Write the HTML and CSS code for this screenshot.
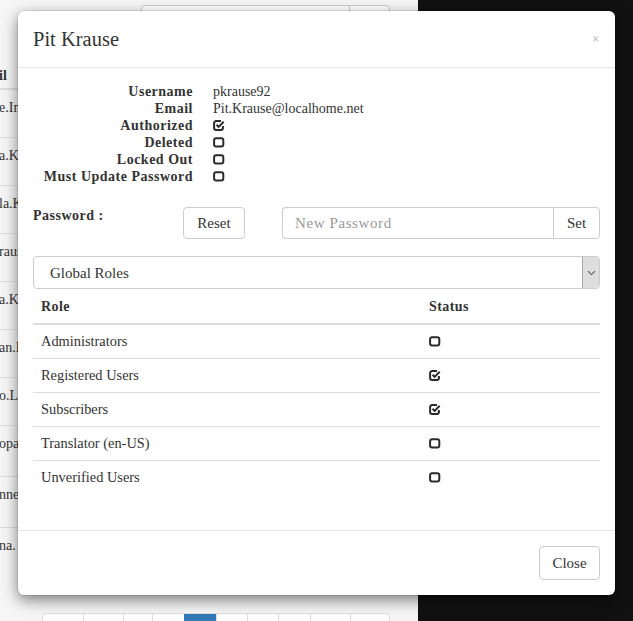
FILE: index.html
```html
<!DOCTYPE html>
<html lang="en">
<head>
<meta charset="utf-8">
<title>Pit Krause</title>
<link rel="stylesheet" href="styles.css">
</head>
<body>
<div class="page">
  <div class="main">
    <div class="top-group"><span class="tg-input"></span><span class="tg-btn"></span></div>
    <div class="bg-table">
      <div class="bg-head">il</div>
      <div class="bg-row">e.Im</div>
      <div class="bg-row">a.K</div>
      <div class="bg-row">la.K</div>
      <div class="bg-row">raus</div>
      <div class="bg-row">a.Ku</div>
      <div class="bg-row">an.K</div>
      <div class="bg-row">o.Le</div>
      <div class="bg-row tall">opa</div>
      <div class="bg-row tall">nne</div>
      <div class="bg-row last">na.</div>
    </div>
    <div class="pager">
      <span class="pg w40"></span><span class="pg w40"></span><span class="pg w30"></span><span class="pg w32"></span><span class="pg w32 active"></span><span class="pg w31"></span><span class="pg w31"></span><span class="pg w33"></span><span class="pg w40"></span><span class="pg w39"></span>
    </div>
  </div>
  <div class="side"></div>
</div>

<div class="modal">
  <div class="m-header">
    <h4 class="m-title">Pit Krause</h4>
    <span class="m-close">×</span>
  </div>
  <div class="m-body">
    <dl class="info">
      <dt>Username</dt><dd>pkrause92</dd>
      <dt>Email</dt><dd>Pit.Krause@localhome.net</dd>
      <dt>Authorized</dt><dd><svg class="ico" width="12" height="11" viewBox="0 0 12 11"><path d="M8 1.1H3.1A2 2 0 0 0 1.1 3.1V7.9A2 2 0 0 0 3.1 9.9H7.9A2 2 0 0 0 9.9 7.9V6" fill="none" stroke="#2b2b2b" stroke-width="2"/><path d="M3.5 4.8L5.6 6.9L10.7 1.8" fill="none" stroke="#2b2b2b" stroke-width="2"/></svg></dd>
      <dt>Deleted</dt><dd><svg class="ico" width="12" height="11" viewBox="0 0 12 11"><rect x="1.1" y="1.2" width="9.2" height="8.4" rx="2" fill="none" stroke="#2b2b2b" stroke-width="2"/></svg></dd>
      <dt>Locked Out</dt><dd><svg class="ico" width="12" height="11" viewBox="0 0 12 11"><rect x="1.1" y="1.2" width="9.2" height="8.4" rx="2" fill="none" stroke="#2b2b2b" stroke-width="2"/></svg></dd>
      <dt>Must Update Password</dt><dd><svg class="ico" width="12" height="11" viewBox="0 0 12 11"><rect x="1.1" y="1.2" width="9.2" height="8.4" rx="2" fill="none" stroke="#2b2b2b" stroke-width="2"/></svg></dd>
    </dl>

    <div class="pw-row">
      <span class="pw-label">Password :</span>
      <button class="btn reset">Reset</button>
      <div class="pw-group">
        <input class="pw-input" type="text" placeholder="New Password">
        <button class="btn set">Set</button>
      </div>
    </div>

    <div class="select">
      <span class="sel-text">Global Roles</span>
      <span class="sel-arrow"><svg width="9" height="6" viewBox="0 0 9 6"><path d="M1 1.2L4.5 4.6L8 1.2" fill="none" stroke="#555" stroke-width="1.1"/></svg></span>
    </div>

    <table class="roles">
      <thead>
        <tr><th class="c-role">Role</th><th>Status</th></tr>
      </thead>
      <tbody>
        <tr><td>Administrators</td><td><svg class="ico" width="12" height="11" viewBox="0 0 12 11"><rect x="1.1" y="1.2" width="9.2" height="8.4" rx="2" fill="none" stroke="#2b2b2b" stroke-width="2"/></svg></td></tr>
        <tr><td>Registered Users</td><td><svg class="ico" width="12" height="11" viewBox="0 0 12 11"><path d="M8 1.1H3.1A2 2 0 0 0 1.1 3.1V7.9A2 2 0 0 0 3.1 9.9H7.9A2 2 0 0 0 9.9 7.9V6" fill="none" stroke="#2b2b2b" stroke-width="2"/><path d="M3.5 4.8L5.6 6.9L10.7 1.8" fill="none" stroke="#2b2b2b" stroke-width="2"/></svg></td></tr>
        <tr><td>Subscribers</td><td><svg class="ico" width="12" height="11" viewBox="0 0 12 11"><path d="M8 1.1H3.1A2 2 0 0 0 1.1 3.1V7.9A2 2 0 0 0 3.1 9.9H7.9A2 2 0 0 0 9.9 7.9V6" fill="none" stroke="#2b2b2b" stroke-width="2"/><path d="M3.5 4.8L5.6 6.9L10.7 1.8" fill="none" stroke="#2b2b2b" stroke-width="2"/></svg></td></tr>
        <tr><td>Translator (en-US)</td><td><svg class="ico" width="12" height="11" viewBox="0 0 12 11"><rect x="1.1" y="1.2" width="9.2" height="8.4" rx="2" fill="none" stroke="#2b2b2b" stroke-width="2"/></svg></td></tr>
        <tr><td>Unverified Users</td><td><svg class="ico" width="12" height="11" viewBox="0 0 12 11"><rect x="1.1" y="1.2" width="9.2" height="8.4" rx="2" fill="none" stroke="#2b2b2b" stroke-width="2"/></svg></td></tr>
      </tbody>
    </table>
  </div>
  <div class="m-footer">
    <button class="btn close-btn">Close</button>
  </div>
</div>
</body>
</html>
```

FILE: styles.css
```css
* { box-sizing: border-box; }

html, body {
  margin: 0;
  padding: 0;
  width: 633px;
  height: 621px;
  overflow: hidden;
}

body {
  font-family: "Liberation Serif", "Times New Roman", serif;
  font-size: 14px;
  color: #333;
  background: #f6f6f6;
}

.page {
  display: flex;
  width: 633px;
  height: 621px;
}

.main {
  width: 418px;
  background: #f6f6f6;
  padding-top: 5px;
}

.side {
  flex: 1;
  background: #111;
}

.top-group {
  display: flex;
  margin-left: 141px;
  width: 249px;
  height: 34px;
  border: 1px solid #ccc;
  border-radius: 4px;
  background: #fff;
}

.tg-input { flex: 1; }
.tg-btn { width: 40px; border-left: 1px solid #ccc; }

.bg-table {
  margin-top: 20px;
}

.bg-head {
  height: 31px;
  padding-top: 8px;
  line-height: 17px;
  font-weight: bold;
  border-bottom: 2px solid #ddd;
  margin-left: -1px;
}

.bg-row {
  height: 48px;
  padding-top: 9px;
  line-height: 17px;
  border-bottom: 1px solid #ddd;
  margin-left: -1px;
}

.bg-row.tall { height: 51px; }
.bg-row.last { height: 47px; border-bottom: 0; }

.pager {
  display: flex;
  margin-top: 38px;
  margin-left: 42px;
  width: 348px;
  height: 34px;
  border: 1px solid #ddd;
  border-radius: 4px;
  background: #fff;
  overflow: hidden;
}

.pg { height: 34px; border-left: 1px solid #ddd; }
.pg:first-child { border-left: 0; }
.pg.w40 { width: 40px; }
.pg.w39 { width: 39px; }
.pg.w33 { width: 33px; }
.pg.w32 { width: 32px; }
.pg.w31 { width: 31px; }
.pg.w30 { width: 30px; }
.pg.active { background: #337ab7; border-color: #337ab7; }

/* modal overlay */
.modal {
  position: absolute;
  left: 18px;
  top: 11px;
  width: 597px;
  height: 584px;
  background: #fff;
  border-radius: 6px;
  box-shadow: 0 5px 15px rgba(0, 0, 0, 0.5), 0 0 0 1px rgba(0, 0, 0, 0.08);
  display: flex;
  flex-direction: column;
}

.m-header {
  display: flex;
  align-items: center;
  justify-content: space-between;
  padding: 15px;
  border-bottom: 1px solid #e5e5e5;
}

.m-title {
  margin: 0;
  font-size: 20.5px;
  font-weight: normal;
  line-height: 26px;
  color: #333;
}

.m-close {
  font-size: 12px;
  font-weight: bold;
  line-height: 12px;
  color: #bdbdbd;
  margin-right: 1px;
}

.m-body {
  flex: 1;
  padding: 15px;
}

.info {
  display: grid;
  grid-template-columns: 160px 1fr;
  column-gap: 20px;
  margin: 0;
  line-height: 17px;
}

.info dt {
  text-align: right;
  font-weight: bold;
  letter-spacing: 0.5px;
}

.info dd {
  margin: 0;
  display: flex;
  align-items: center;
  height: 17px;
}

.ico { display: block; }

.pw-row {
  display: flex;
  align-items: flex-start;
  margin-top: 22px;
}

.pw-label {
  width: 150px;
  font-weight: bold;
  letter-spacing: 0.5px;
  line-height: 15px;
  padding-top: 1px;
}

.btn {
  font-family: "Liberation Serif", "Times New Roman", serif;
  font-size: 15px;
  color: #333;
  background: #fff;
  border: 1px solid #ccc;
  border-radius: 4px;
  padding: 0 12px;
  line-height: 30px;
}

.reset {
  width: 62px;
  height: 32px;
  padding: 0;
}

.pw-group {
  flex: 1;
  display: flex;
  margin-left: 37px;
  height: 32px;
}

.pw-input {
  flex: 1;
  min-width: 0;
  height: 32px;
  border: 1px solid #ccc;
  border-right: 0;
  border-radius: 4px 0 0 4px;
  padding: 0 12px;
  font-family: "Liberation Serif", "Times New Roman", serif;
  font-size: 15px;
  letter-spacing: 0.6px;
  color: #555;
  outline: none;
}

.pw-input::placeholder { color: #999; }

.set {
  width: 47px;
  height: 32px;
  padding: 0;
  border-radius: 0 4px 4px 0;
}

.select {
  display: flex;
  align-items: stretch;
  margin-top: 17px;
  height: 33px;
  border: 1px solid #ccc;
  border-radius: 4px;
  background: #fff;
}

.sel-text {
  flex: 1;
  padding-left: 16px;
  font-size: 15px;
  line-height: 32px;
}

.sel-arrow {
  width: 17px;
  background: #dedede;
  border-left: 1px solid #a9a9a9;
  border-radius: 0 3px 3px 0;
  display: flex;
  align-items: center;
  justify-content: center;
}

.roles {
  width: 100%;
  border-collapse: collapse;
  table-layout: fixed;
  margin-top: 1px;
  margin-bottom: 20px;
}

.roles th, .roles td {
  text-align: left;
  padding: 8px;
  line-height: 17px;
  vertical-align: middle;
}

.roles td { font-size: 14.4px; }

.roles th {
  font-weight: bold;
  letter-spacing: 0.4px;
  border-bottom: 2px solid #ddd;
}

.roles .c-role { width: 388px; }

.roles td { border-top: 1px solid #ddd; }
.roles tbody tr:first-child td { border-top: 0; }

.m-footer {
  display: flex;
  justify-content: flex-end;
  padding: 15px;
  border-top: 1px solid #e5e5e5;
}

.close-btn {
  width: 61px;
  height: 34px;
  padding: 0;
}
```
